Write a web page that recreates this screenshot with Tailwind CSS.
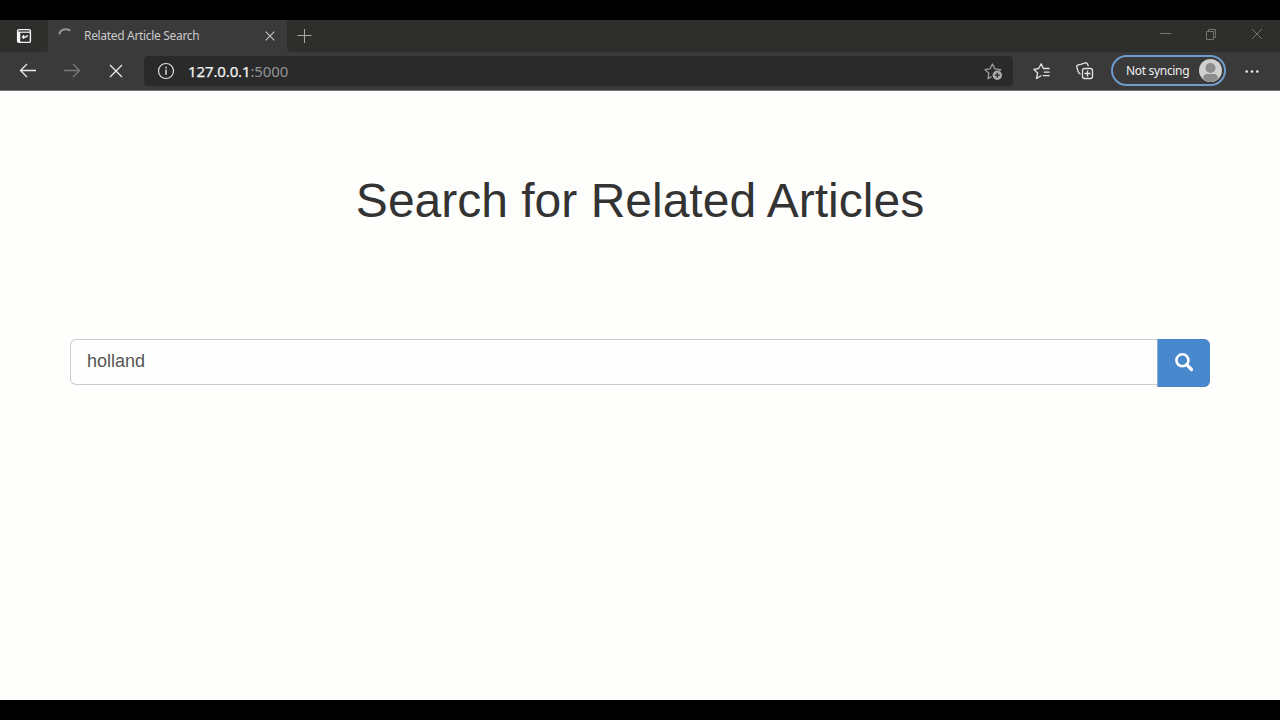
<!DOCTYPE html>
<html lang="en">
<head>
<meta charset="utf-8">
<title>Related Article Search</title>
<script src="https://cdn.jsdelivr.net/npm/@tailwindcss/browser@4"></script>
</head>
<body class="flex h-screen flex-col overflow-hidden bg-[#fefefd] py-5 font-['Noto_Sans',sans-serif] [background-image:linear-gradient(#000_20px,transparent_20px,transparent_700px,#000_700px)]">
  <!-- Tab strip -->
  <header class="flex h-8 shrink-0 bg-[#3a3a3b]">
    <div class="flex w-12 items-center justify-center rounded-br-[4px] bg-[#2e2e2d]">
      <svg class="size-4" viewBox="0 0 16 16" fill="none" stroke="#f5f5f5">
        <rect x="1.6" y="1.6" width="12.8" height="12.8" rx="1.5" stroke-width="1.4"/>
        <path d="M2 4.2h12" stroke-width="1.2"/><path d="M3 4v10" stroke-width="2.6"/>
        <path d="M6.3 9h3.2c1.2 0 1.8-.7 1.8-1.9M8.1 7.3L6.5 9l1.6 1.7" stroke-width="1.3"/>
      </svg>
    </div>
    <div class="flex w-[239px] items-center bg-[#3a3a3b] pl-[9px] pr-[10px]">
      <svg class="mb-1 size-4 shrink-0" viewBox="0 0 16 16" fill="none" stroke="#969696" stroke-width="2"><path d="M2.2 8.4C3.2 3.6 8.3 1.8 13.3 4.6"/></svg>
      <span class="ml-[11px] flex-1 whitespace-nowrap text-[12px] tracking-[-0.32px] text-[#c9c9c9]">Related Article Search</span>
      <svg class="size-3.5 shrink-0" viewBox="0 0 14 14" stroke="#c5c5c5" stroke-width="1.1"><path d="M2.7 2.7l8.6 8.6M11.3 2.7l-8.6 8.6"/></svg>
    </div>
    <div class="flex flex-1 items-center rounded-bl-[4px] bg-[#2e2e2d] pl-[9px]">
      <svg class="size-4" viewBox="0 0 16 16" stroke="#a7a7a5" stroke-width="1"><path d="M1.5 7.5h14M8.5 1v14"/></svg>
      <div class="ml-auto flex items-center gap-[30px] pr-[15px] pb-1">
        <svg class="size-4" viewBox="0 0 16 16" stroke="#737371"><path d="M3 7.5h11"/></svg>
        <svg class="size-4" viewBox="0 0 16 16" fill="none" stroke="#737371"><path d="M3.5 5.5h7v8h-7zM5.5 5.5v-2h7v8h-2"/></svg>
        <svg class="size-4" viewBox="0 0 16 16" stroke="#737371"><path d="M3 3l10 10M13 3L3 13"/></svg>
      </div>
    </div>
  </header>

  <!-- Toolbar -->
  <nav class="flex h-[39px] shrink-0 items-center border-b border-[#777] bg-[#3a3a3b]">
    <svg class="ml-[18px] size-5" viewBox="0 0 20 20" fill="none" stroke="#ececec" stroke-width="1.3"><path d="M18 9.5H2.5M9 3L2.5 9.5 9 16"/></svg>
    <svg class="ml-6 size-5" viewBox="0 0 20 20" fill="none" stroke="#7b7b7b" stroke-width="1.3"><path d="M2 9.5h15.5M11 3l6.5 6.5L11 16"/></svg>
    <svg class="ml-6 size-5" viewBox="0 0 20 20" fill="none" stroke="#ececec" stroke-width="1.3"><path d="M4 4l12 12M16 4L4 16"/></svg>
    <div class="ml-[18px] flex h-[30px] w-[869px] items-center rounded-[4px] bg-[#2a2a2b] pl-3 pr-[10px]">
      <svg class="size-5" viewBox="0 0 20 20" fill="none" stroke="#dedede" stroke-width="1.2"><circle cx="10" cy="10" r="7.5"/><path d="M10 8.5v5.2M10 5.7v1.6" stroke-width="1.5"/></svg>
      <span class="ml-3 text-[15px] tracking-[-0.12px] text-[#939393]"><span class="text-[#f2f2f2] [-webkit-text-stroke:0.25px_#f2f2f2]">127.0.0.1</span>:5000</span>
      <svg class="ml-auto size-5" viewBox="0 0 20 20" fill="none" stroke="#9c9c9c" stroke-width="1.3" stroke-linejoin="round"><path d="M8.6 15.6l-3.6 2 .8-5.4L2 8.6l5.1-.8L9.4 3l2.4 4.8 5.9.8-1.2 1.3"/><circle cx="14.3" cy="14.2" r="4.7" fill="#aaa" stroke="none"/><path d="M14.3 11.7v5M11.8 14.2h5" stroke="#2a2a2b"/></svg>
    </div>
    <svg class="ml-[19px] size-5" viewBox="0 0 20 20" fill="none" stroke="#e2e2e2" stroke-width="1.3" stroke-linejoin="round"><path d="M9.5 14.5l-5 3L5.6 12 1.8 8.3l4.9-.8L9.2 2.8l2.2 4.7h6.3M11.8 11.1h5.9M10.8 14.7h6.9"/></svg>
    <svg class="ml-[23px] size-5" viewBox="0 0 20 20" fill="none" stroke="#e2e2e2" stroke-width="1.3"><rect x="7.5" y="7.5" width="10" height="10" rx="2"/><path d="M12.5 9.5v6M9.5 12.5h6M5.5 13.2C4 12.5 3.4 11.6 3.1 10.5L1.8 6.1c-.3-1.2.2-1.9 1.4-2.2l2.4-.6M5.6 3.3l4.7-1.5c1.2-.3 1.8.2 2.2 1.3l.9 2.2"/></svg>
    <div class="mb-px ml-4 flex h-[31px] w-[115px] items-center rounded-full border-2 border-[#6f9ccb] pl-[13px] pr-[2px]">
      <span class="whitespace-nowrap text-[12px] tracking-[-0.32px] text-[#f0f0f0]">Not syncing</span>
      <svg class="ml-auto size-[23px] shrink-0" viewBox="0 0 23 23"><circle cx="11.5" cy="11.5" r="11.5" fill="#d0d0cf"/><circle cx="11.5" cy="9" r="5" fill="#8d8d8d"/><path d="M4 19.8c0-3.2 1.5-4.8 4-4.8h7c2.5 0 4 1.6 4 4.8a10.6 10.6 0 0 1-15 0z" fill="#8d8d8d"/></svg>
    </div>
    <svg class="ml-[18px] size-4" viewBox="0 0 16 16" fill="#ececec"><circle cx="2.7" cy="8.5" r="1.3"/><circle cx="8" cy="8.5" r="1.3"/><circle cx="13.3" cy="8.5" r="1.3"/></svg>
  </nav>

  <main class="flex-1 px-[70px] pt-[81px] font-['Liberation_Sans',Arial,sans-serif]">
    <h1 class="text-center text-[48px] leading-[58px] text-[#333]">Search for Related Articles</h1>
    <form class="mt-[109px] flex items-start" onsubmit="return false">
      <input type="text" value="holland" aria-label="Search" class="h-[46px] flex-1 rounded-l-[6px] border border-r-0 border-[#ccc] bg-[#fefefe] px-4 pb-0.5 text-[18px] text-[#555] outline-none">
      <button type="submit" aria-label="Submit" class="flex h-12 w-[53px] items-center justify-center rounded-r-[6px] border border-[#4783c7] border-l-[#8aacd2] bg-[#4888cd]">
        <svg class="mb-0.5 size-5" viewBox="0 0 20 20" fill="none" stroke="#fff"><circle cx="8.4" cy="8.3" r="6" stroke-width="2.6"/><path d="M12.7 12.7l4.8 4.8" stroke-width="3.2" stroke-linecap="round"/></svg>
      </button>
    </form>
  </main>
</body>
</html>
